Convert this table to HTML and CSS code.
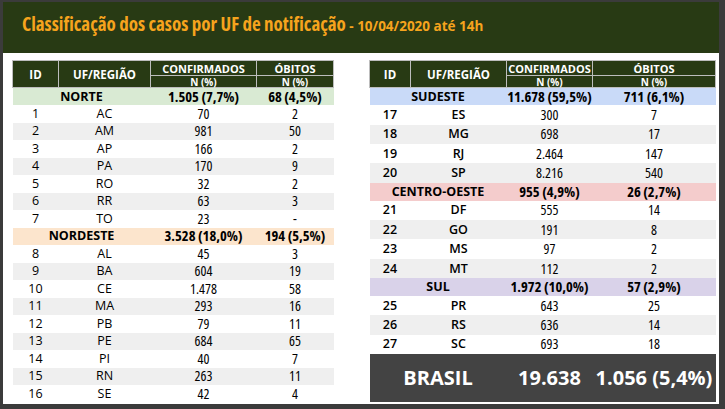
FILE: index.html
```html
<!DOCTYPE html>
<html lang="pt-BR">
<head>
<meta charset="utf-8">
<title>Classificação dos casos por UF de notificação</title>
<link rel="stylesheet" href="styles.css">
</head>
<body>
<div class="slide">
  <header class="hdr">
    <h1 class="title">Classificação dos casos por UF de notificação <span class="sub">- 10/04/2020 até 14h</span></h1>
  </header>
  <main class="content">
    <table class="tbl tbl-left">
      <colgroup><col class="cl-id"><col class="cl-uf"><col class="cl-conf"><col class="cl-ob"></colgroup>
      <thead>
        <tr class="h1"><th rowspan="2">ID</th><th rowspan="2">UF/REGIÃO</th><th>CONFIRMADOS</th><th>ÓBITOS</th></tr>
        <tr class="h2"><th>N (%)</th><th>N (%)</th></tr>
      </thead>
      <tbody>
        <tr class="reg norte"><td colspan="2">NORTE</td><td>1.505 (7,7%)</td><td>68 (4,5%)</td></tr>
        <tr><td>1</td><td>AC</td><td>70</td><td>2</td></tr>
        <tr class="alt"><td>2</td><td>AM</td><td>981</td><td>50</td></tr>
        <tr><td>3</td><td>AP</td><td>166</td><td>2</td></tr>
        <tr class="alt"><td>4</td><td>PA</td><td>170</td><td>9</td></tr>
        <tr><td>5</td><td>RO</td><td>32</td><td>2</td></tr>
        <tr class="alt"><td>6</td><td>RR</td><td>63</td><td>3</td></tr>
        <tr><td>7</td><td>TO</td><td>23</td><td>-</td></tr>
        <tr class="reg nordeste"><td colspan="2">NORDESTE</td><td>3.528 (18,0%)</td><td>194 (5,5%)</td></tr>
        <tr><td>8</td><td>AL</td><td>45</td><td>3</td></tr>
        <tr class="alt"><td>9</td><td>BA</td><td>604</td><td>19</td></tr>
        <tr><td>10</td><td>CE</td><td>1.478</td><td>58</td></tr>
        <tr class="alt"><td>11</td><td>MA</td><td>293</td><td>16</td></tr>
        <tr><td>12</td><td>PB</td><td>79</td><td>11</td></tr>
        <tr class="alt"><td>13</td><td>PE</td><td>684</td><td>65</td></tr>
        <tr><td>14</td><td>PI</td><td>40</td><td>7</td></tr>
        <tr class="alt"><td>15</td><td>RN</td><td>263</td><td>11</td></tr>
        <tr><td>16</td><td>SE</td><td>42</td><td>4</td></tr>
      </tbody>
    </table>

    <table class="tbl tbl-right">
      <colgroup><col class="cr-id"><col class="cr-uf"><col class="cr-conf"><col class="cr-ob"></colgroup>
      <thead>
        <tr class="h1"><th rowspan="2">ID</th><th rowspan="2">UF/REGIÃO</th><th>CONFIRMADOS</th><th>ÓBITOS</th></tr>
        <tr class="h2"><th>N (%)</th><th>N (%)</th></tr>
      </thead>
      <tbody>
        <tr class="reg sudeste"><td colspan="2">SUDESTE</td><td>11.678 (59,5%)</td><td>711 (6,1%)</td></tr>
        <tr><td>17</td><td>ES</td><td>300</td><td>7</td></tr>
        <tr class="alt"><td>18</td><td>MG</td><td>698</td><td>17</td></tr>
        <tr><td>19</td><td>RJ</td><td>2.464</td><td>147</td></tr>
        <tr class="alt"><td>20</td><td>SP</td><td>8.216</td><td>540</td></tr>
        <tr class="reg centro"><td colspan="2">CENTRO-OESTE</td><td>955 (4,9%)</td><td>26 (2,7%)</td></tr>
        <tr><td>21</td><td>DF</td><td>555</td><td>14</td></tr>
        <tr class="alt"><td>22</td><td>GO</td><td>191</td><td>8</td></tr>
        <tr><td>23</td><td>MS</td><td>97</td><td>2</td></tr>
        <tr class="alt"><td>24</td><td>MT</td><td>112</td><td>2</td></tr>
        <tr class="reg sul"><td colspan="2">SUL</td><td>1.972 (10,0%)</td><td>57 (2,9%)</td></tr>
        <tr><td>25</td><td>PR</td><td>643</td><td>25</td></tr>
        <tr class="alt"><td>26</td><td>RS</td><td>636</td><td>14</td></tr>
        <tr><td>27</td><td>SC</td><td>693</td><td>18</td></tr>
      </tbody>
      <tfoot>
        <tr class="total"><td colspan="2">BRASIL</td><td>19.638</td><td>1.056 (5,4%)</td></tr>
      </tfoot>
    </table>
  </main>
</div>
</body>
</html>
```
FILE: styles.css
```css
html, body {
  margin: 0;
  padding: 0;
}
body {
  background: #3b3b3b;
  font-family: "Open Sans", "Noto Sans", "DejaVu Sans", sans-serif;
  color: #000;
}
.slide {
  margin: 2px 0 0 3px;
  width: 716px;
  height: 402px;
  background: #ffffff;
  display: flex;
  flex-direction: column;
}
.hdr {
  height: 51px;
  background: #283a14;
  padding: 12px 0 0 19px;
  box-sizing: border-box;
  flex: none;
}
.title {
  margin: 0;
  font-size: 19px;
  line-height: 20px;
  font-weight: 700;
  font-stretch: 85%;
  color: #f6a41d;
  white-space: nowrap;
  letter-spacing: 0;
}
.sub {
  font-size: 13.5px;
  font-stretch: 88%;
}
.content {
  display: flex;
  justify-content: space-between;
  align-items: flex-start;
  padding: 7px 3px 0 9px;
}
.tbl {
  border-collapse: collapse;
  table-layout: fixed;
  font-stretch: 82%;
}
.tbl-left { width: 321px; }
.tbl-right { width: 346px; }
.cl-id { width: 46px; }
.cl-uf { width: 92px; }
.cl-conf { width: 106px; }
.cl-ob { width: 77px; }
.cr-id { width: 41px; }
.cr-uf { width: 96px; }
.cr-conf { width: 86px; }
.cr-ob { width: 123px; }

.tbl th {
  background: #283a14;
  color: #ffffff;
  border: 1px solid #bdbdbd;
  font-weight: 700;
  font-size: 11px;
  font-stretch: 88%;
  padding: 0;
  line-height: 11px;
  text-align: center;
  vertical-align: middle;
}
.tbl .h1 { height: 15px; }
.tbl .h2 { height: 12px; }
.tbl .h2 th { font-size: 10px; line-height: 10px; }
.tbl .h1 th[rowspan] { font-size: 11.5px; }

.tbl td {
  padding: 0;
  text-align: center;
  vertical-align: middle;
  line-height: 14px;
  font-size: 14px;
  white-space: nowrap;
}
.tbl td:nth-child(1),
.tbl td:nth-child(2) {
  font-size: 12.5px;
  font-stretch: 92%;
}
.tbl-left tbody tr { height: 17.5px; }
.tbl-right tbody tr { height: 19.4px; }
.tbl-right tbody tr.reg { height: 17.8px; }
.tbl-right tbody td:nth-child(1),
.tbl-right tbody td:nth-child(2) {
  font-weight: 600;
  font-stretch: 88%;
}
.tbl tr.alt { background: #efefef; }

.tbl tr.reg td {
  font-weight: 700;
  font-size: 14.5px;
  font-stretch: 84%;
}
.tbl tr.reg td:first-child {
  font-size: 12.5px;
  font-stretch: 88%;
}
.norte { background: #d9ead3; }
.nordeste { background: #fce5cd; }
.sudeste { background: #c9daf8; }
.centro { background: #f4cccc; }
.sul { background: #d9d2e9; }

.tbl tr.total {
  height: 48px;
  background: #434343;
}
.tbl tr.total td,
.tbl tr.total td:first-child {
  color: #ffffff;
  font-weight: 700;
  font-size: 20px;
  font-stretch: 100%;
  line-height: 24px;
}
```
